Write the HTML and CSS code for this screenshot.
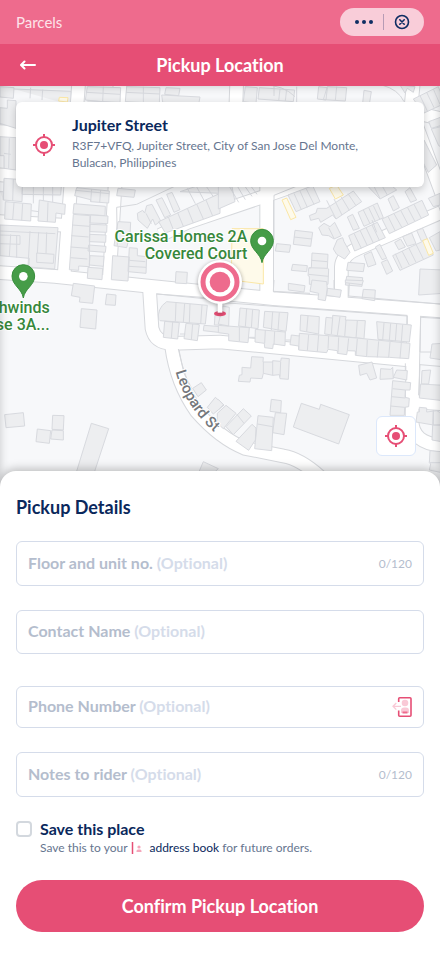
FILE: index.html
```html
<!DOCTYPE html>
<html lang="en">
  <head>
    <meta charset="UTF-8" />
    <meta name="viewport" content="width=device-width, initial-scale=1.0" />
    <title>Pickup Location</title>
    <link rel="stylesheet" href="styles.css">
  </head>
  <body>
    <!-- mini app bar -->
    <div class="app-bar">
      <span class="app-name">Parcels</span>
      <div class="capsule">
        <button type="button" class="capsule-btn" aria-label="More">
          <svg width="20" height="20" viewBox="0 0 20 20">
            <circle cx="3" cy="10" r="2" fill="#0f2d63" />
            <circle cx="10" cy="10" r="2" fill="#0f2d63" />
            <circle cx="17" cy="10" r="2" fill="#0f2d63" />
          </svg>
        </button>
        <button type="button" class="capsule-btn" aria-label="Close">
          <svg width="16" height="16" viewBox="0 0 16 16" fill="none" stroke="#0f2d63" stroke-width="1.6" stroke-linecap="round">
            <circle cx="8" cy="8" r="6.5" />
            <path d="M5.8 5.8l4.4 4.4M10.2 5.8l-4.4 4.4" />
          </svg>
        </button>
      </div>
    </div>

    <!-- title bar -->
    <header class="title-bar">
      <button type="button" class="back" aria-label="Back">
        <svg width="16" height="10" viewBox="0 0 16 10" fill="none" stroke="#fff" stroke-width="2" stroke-linecap="round" stroke-linejoin="round">
          <path d="M15 5H1.5M4.5 1.5L1 5l3.500 3.500" />
        </svg>
      </button>
      <h1>Pickup Location</h1>
    </header>

    <!-- map -->
    <section class="map">
      <svg class="map-canvas" viewBox="0 258 1320 1206" preserveAspectRatio="xMidYMin slice" role="img" aria-label="Map">
        <defs>
          <g id="roads">
            <path d="M-10 817L165 829L430 857L820 896L1340 934" />
            <path d="M448 860L456 985Q465 1028 515 1030L660 1026L1225 1080" />
            <path d="M1242 920L1238 1100L1236 1260Q1236 1332 1330 1336M1240 1206L1340 1212" />
            <path d="M515 1040Q530 1150 590 1235Q660 1315 735 1345L850 1368Q900 1376 960 1430" />
            <path d="M800 560L800 890" />
            <path d="M480 706L560 668L790 590L960 530" />
            <path d="M1024 900L1024 800Q1026 765 1075 745L1220 682L1340 630" />
            <path d="M236 250L218 480L192 830" />
            <path d="M360 250L345 560L328 835" />
            <path d="M-10 394L60 398M-10 524L70 530M-10 664L200 676" />
            <path d="M710 250L704 420M1240 250L1232 330L1340 620M1232 335L1340 360" />
          </g>
        </defs>
        <rect x="0" y="258" width="1320" height="1206" fill="#f7f8fa" />
        <use href="#roads" class="road-edge" />
        <use href="#roads" class="road" />

        <!-- north west blocks -->
        <g class="building" transform="translate(0 255)">
          <path d="M0 5L42 8L40 40L0 36zM42 12L213 19L211 60M92 8L90 40M128 14L126 45M0 68L22 70L22 45L48 47L48 130L0 115z" />
          <path d="M0 155L48 158V255L12 250V212H0zM12 205L32 208M28 160L26 250" />
          <path d="M262 5L362 8L360 55L256 45zM310 5L308 50M260 22L360 28M262 48L360 52M380 5L480 8L478 55L376 50zM430 5V55M378 22L480 27M498 8L540 10L536 32L494 28zM485 30L600 36L596 58L488 52z" />
          <path d="M12 280L68 284L66 350L10 345zM40 282L38 348M0 320L10 320V345M68 288L185 294L182 330L66 328zM100 290V355M130 291V360M158 293V362" />
          <path d="M16 350L94 357L92 408L14 402zM42 352L38 404M68 355L65 406M118 345L196 358L194 388L168 384L166 412L114 408zM144 352L142 411M94 377L116 380" />
          <path d="M0 420L174 428L164 552L86 546L88 520L0 512zM32 448L28 514M50 450V518M90 438L84 545M116 441L112 505M140 442L138 506M166 446L0 438M0 450L60 452V478L0 476M110 504L162 508L160 535L110 532z" />
          <path d="M230 308L328 318L326 354L272 350V344L224 332zM275 312L272 350M302 315L299 352M226 316L328 326" />
          <path d="M222 356L316 364L315 392L219 386z" />
          <path d="M220 388L270 392L268 545L236 543V556L208 554zM216 420L268 424M214 452L266 456M212 486L264 490M211 518L262 522M272 390L324 393L323 416L270 414zM270 418L321 420L320 442L269 440zM269 448L318 450L317 472L268 470zM266 480L318 484L316 502L264 498zM270 512L312 514L310 544L268 540zM264 547L308 550L306 584L262 580z" />
          <path d="M354 310L406 315L402 337L350 332z" />
          <path d="M354 410L392 412L390 450L380 488L342 482zM338 512L388 516L384 588L334 584zM388 488L412 490V512L440 515L438 565L384 560zM388 526L436 530M386 544L438 547" />
          <path d="M412 385L428 376L434 384L440 362L456 358L482 408L466 420L458 402L442 430L414 405zM438 385L454 416M468 345L486 338L512 390L494 398zM500 328L516 322L540 374L522 382z" />
          <path d="M476 410L660 325V385L496 444zM505 396L520 434M533 383L550 424M562 370L580 414M590 357L610 402M618 345L638 393M540 320L600 300H660V325zM562 310L586 356M588 302L612 346M616 300L640 335M470 442L490 458" />
          <path d="M528 560L562 562L560 596L526 594z" />
        </g>

        <!-- north east blocks -->
        <g class="building" transform="translate(660 255)">
          <path d="M76 5L112 8L108 55L70 50zM118 8L224 15L220 50L114 42zM180 12L176 48M200 12L196 48M230 5V60M296 5L322 8L318 45L292 42zM322 5L380 8L376 48L310 44zM350 5L346 46M432 16L454 20L448 58L428 54zM540 0L585 5L580 22L562 10L555 24z" />
          <path d="M580 42L655 5L675 55L610 85zM600 32L622 78M620 22L642 68M640 12L660 58M626 110L675 92V118L634 130zM634 132L662 125V185L656 182zM600 170L612 165L650 240L625 262L600 215z" />
          <path d="M-5 305L35 300L45 350L-5 372zM28 304L56 352M50 300L76 344M72 300L96 334M90 300L111 328" />
          <path d="M204 330L278 302L300 350L228 380zM222 325L244 374M240 318L262 367M258 310L282 358" />
          <path d="M268 392L288 384L292 370L320 370L400 318L425 350L348 402L338 390L302 412L296 400L272 406zM320 346L348 402M342 342L366 390M364 336L388 376M384 326L408 362" />
          <path d="M440 300L480 342L530 315L510 298zM460 300L480 340M485 300L502 330M555 320L570 308L590 345L572 352zM504 342L520 332L538 368L520 378z" />
          <path d="M296 428L312 415L330 425L344 412L364 452L342 462L326 452L306 450zM326 428L342 460M382 396L398 388L418 430L400 436z" />
          <path d="M414 382L472 354L490 398L432 424zM430 375L450 416M446 368L466 410M460 362L480 404M386 452L472 412L496 458L404 498zM402 445L424 490M420 436L442 482M438 428L460 474M456 420L478 466M456 405L470 442" />
          <path d="M486 402L606 346L626 390L508 446zM504 394L526 438M522 386L546 428M542 376L564 418M562 366L584 408M582 358L604 400M625 340L660 325V360L640 365zM655 360L665 390" />
          <path d="M340 492L352 464L368 458L372 470L390 502L374 522L350 508zM432 510L454 500L468 538L444 546zM466 486L480 478L500 520L486 524zM484 532L502 524L518 558L500 568z" />
          <path d="M518 512L610 468L640 510L540 556zM526 506L546 550M546 498L568 540M566 488L588 532M588 478L610 522M524 472L542 462L556 486L536 494zM548 455L575 444L588 476L562 484zM590 436L608 430L622 462L604 468zM628 458L660 440V495L648 498z" />
          <path d="M225 436L278 442L272 484L220 478zM222 456L276 462M170 476L212 480L208 502L166 498zM276 504L324 508L322 550L326 552L324 598H268V574L264 572L266 550L274 548zM274 526L322 530M266 548L322 550M266 568L325 574M218 538L262 542L260 560L214 556z" />
          <path d="M384 532L434 536L430 560L380 556zM380 574L428 578L426 604L376 600zM600 552L670 555V625L596 630z" />
        </g>

        <!-- south west blocks -->
        <g class="building" transform="translate(0 840)">
          <path d="M220 10L284 18L278 70L238 66L240 52L214 47zM320 42L348 45L346 76L316 74zM244 86L291 90L287 147L240 142z" />
          <path d="M14 404L70 398L74 438L18 443zM158 406L192 407L190 450L156 448zM156 450L190 452V480L152 477zM112 447L152 452L148 490L108 485zM274 430L326 446L282 580L228 580zM610 545L655 566L640 580H595z" />
          <path d="M476 122Q470 85 500 65L622 76L616 132L480 122M528 68L526 124M554 70L550 126M570 72L568 128M606 75L602 132M494 124L538 128L533 177L490 172zM518 126L514 174M558 130L598 134L592 182L552 176zM578 132L574 180M540 162H556M612 136L664 140V158L610 152zM645 105L664 107V135H643z" />
          <path d="M578 325L604 308L619 330L594 350zM646 352L672 375L640 402L622 382zM652 405L664 394V415z" />
        </g>

        <!-- south east blocks -->
        <g class="building" transform="translate(660 840)">
          <path d="M205 10L255 17L252 36L205 30zM276 0L320 5L322 28L316 62L294 58L296 40L270 34zM322 25L364 30L360 52L320 46zM376 0L430 2L426 14L376 8zM430 28L466 30L464 62L426 56z" />
          <path d="M8 78L28 82L26 138L-5 132zM60 84L118 90L114 146L56 138zM80 86L76 140M98 88L94 144M134 94L204 98L198 154L130 142zM158 95L154 150M178 97L174 152M-5 136L88 143L84 188L26 182V162L-5 158zM58 142L58 184" />
          <path d="M106 148L196 156L195 197L160 192L158 206L134 203L133 190L105 186zM136 150L134 190M164 154L162 194M88 172H105M196 180H212" />
          <path d="M242 105L298 110L296 162L240 152zM264 108L260 155M318 112L338 114V106L378 110L376 120L436 122L432 176L374 170L314 162zM338 114L334 162M360 110L352 166M378 120L374 170M412 122L408 175M470 125L574 135L568 186L474 178zM492 128L488 180M512 130L508 182M530 132L526 184M548 134L544 185" />
          <path d="M214 165L238 168V160L410 174L570 190L566 236L508 232L442 230L406 226V213L382 212L380 224L352 220V212L324 208L320 218L236 210V198L210 194zM238 165L236 208M266 164L262 212M296 164L292 215M326 168L324 206M356 172L354 218M386 175L382 212M412 176L408 225M442 180L440 228M476 184L472 232M510 186L506 232M544 188L540 235" />
          <path d="M95 230L130 232L129 246H158V242L182 244L184 234L208 236L205 298L180 296L178 284L158 286L130 280L126 296L92 294L90 306L55 304L58 286L66 284V262L92 264zM158 244V286M182 246L180 290M130 246V280" />
          <path d="M416 256L456 246L470 294L450 300L440 280L420 286zM482 266L512 268L518 262L520 296L480 298zM530 270L562 272L560 300L520 292zM518 302L572 308L570 330H556L555 352L568 355L566 380L554 382L553 406H510zM518 326L556 330M515 350L556 354M512 378L554 382" />
          <path d="M244 370L298 388L302 373L388 404L356 492L220 441z" />
          <path d="M154 358L184 362L182 398L150 394zM166 398L200 400L192 464L158 458zM114 407L160 412L155 512L104 506zM112 432L158 440M96 433L108 444L106 480L86 511L48 484zM18 376L48 400L10 446L-8 430V400zM70 386L94 408L40 464L18 440zM50 402L72 430M-5 358L10 374L-5 390" />
          <path d="M636 192L670 190V240L630 234zM606 272L632 270L626 312H604zM602 312L670 316V362L598 354zM598 382L620 384V396L650 392L665 400V435H640L588 426L592 396L598 396zM640 390V435H665V485L636 480zM630 512L675 516V580L628 570L632 552L628 548zM630 548H665" />
        </g>

        <!-- plot borders -->
        <g class="plot">
          <path d="M822 255V288M790 255Q850 255 885 290" />
          <path d="M822 720V586L928 543" />
          <path d="M1145 255Q1195 268 1212 305" />
          <path d="M352 737L350 622L410 613L530 556" />
          <path d="M822 840L820 874L930 880M1002 840V866M1048 850L1046 888L1320 912" />
          <path d="M1330 956L1262 952L1260 1056H1294M1330 1100L1260 1094L1256 1185" />
          <path d="M670 908L810 918L1222 948V972M1216 1112V1090" />
          <path d="M470 882L660 896M535 1047L552 1120L575 1165" />
        </g>

        <!-- yellow places -->
        <g class="place">
          <path d="M178 292L204 293L202 306L176 303z" />
          <path d="M696 686H778L790 686V852L694 840z" />
          <path d="M846 600L860 594L888 652L872 659z" />
          <path d="M988 565L1010 555L1030 585L1006 597z" />
          <path d="M1268 722L1282 716L1300 760L1286 766z" />
        </g>

        <path id="leopard" d="M527 1115Q553 1210 630 1285L690 1340" fill="none" />
        <text class="street-name"><textPath href="#leopard">Leopard St</textPath></text>

        <g class="place-name">
          <text x="742" y="727" text-anchor="end">Carissa Homes 2A</text>
          <text x="742" y="777" text-anchor="end">Covered Court</text>
          <text x="149" y="939" text-anchor="end">hwinds</text>
          <text x="149" y="989" text-anchor="end">se 3A...</text>
        </g>

        <!-- green pins -->
        <g id="pin" fill="#469c48" stroke="#388e3c" stroke-width="3">
          <path d="M786 788C782 760 752 750 752 722A34 34 0 0 1 820 722C820 750 790 760 786 788z" />
          <circle cx="786" cy="723" r="13" fill="#fff" stroke="none" />
        </g>
        <use href="#pin" x="-716" y="106" />

        <!-- pickup marker -->
        <ellipse cx="660" cy="941" rx="18" ry="8" fill="#e64e75" />
        <g class="marker" fill="#fff">
          <path d="M653 895h14v43h-14z" />
          <circle cx="660" cy="846" r="66" />
        </g>
        <circle cx="660" cy="846" r="51" fill="#fff" stroke="#ee6b8d" stroke-width="15" />
        <circle cx="660" cy="846" r="31" fill="#ee6b8d" />
      </svg>

      <div class="address-card">
        <svg class="target" viewBox="0 0 22 22" aria-hidden="true">
          <circle cx="11" cy="11" r="8" fill="none" stroke="#e64e75" stroke-width="2" />
          <circle cx="11" cy="11" r="4" fill="#e64e75" />
          <path d="M11 0v4M11 18v4M0 11h4M18 11h4" stroke="#e64e75" stroke-width="2" />
        </svg>
        <div class="address-text">
          <h2>Jupiter Street</h2>
          <p>R3F7+VFQ, Jupiter Street, City of San Jose Del Monte, Bulacan, Philippines</p>
        </div>
      </div>

      <button type="button" class="locate" aria-label="Use my location">
        <svg class="target" viewBox="0 0 22 22">
          <circle cx="11" cy="11" r="8" fill="none" stroke="#e64e75" stroke-width="2" />
          <circle cx="11" cy="11" r="4" fill="#e64e75" />
          <path d="M11 0v4M11 18v4M0 11h4M18 11h4" stroke="#e64e75" stroke-width="2" />
        </svg>
      </button>
    </section>

    <!-- details form -->
    <form class="sheet">
      <h2>Pickup Details</h2>

      <div class="field field-counted">
        <input type="text" id="floor" maxlength="120" />
        <label for="floor">Floor and unit no. <span>(Optional)</span></label>
        <span class="counter">0/120</span>
      </div>
      <div class="field">
        <input type="text" id="contact" />
        <label for="contact">Contact Name <span>(Optional)</span></label>
      </div>
      <div class="field field-phone">
        <input type="tel" id="phone" />
        <label for="phone">Phone Number <span>(Optional)</span></label>
        <button type="button" class="contacts" aria-label="Pick from contacts">
          <svg width="20" height="22" viewBox="0 0 20 22" fill="none">
            <circle cx="13" cy="7" r="3.300" fill="#f9c9d6" />
            <path d="M9 17v-2.500q0-3 3-3h2q3 0 3 3V17z" fill="#f9c9d6" />
            <path d="M10.500 16.500h5" stroke="#ee6b8d" stroke-width="2" />
            <path d="M6.700 6V2.700Q6.700 1.700 7.700 1.700H18Q19 1.700 19 2.700V19.300Q19 20.300 18 20.300H7.700Q6.700 20.300 6.700 19.300V14.500" stroke="#e64e75" stroke-width="1.600" />
            <path d="M9 10.300H1M4.300 7L1 10.300l3.300 3.300" stroke="#f9c9d6" stroke-width="1.300" />
          </svg>
        </button>
      </div>
      <div class="field field-counted">
        <input type="text" id="notes" maxlength="120" />
        <label for="notes">Notes to rider <span>(Optional)</span></label>
        <span class="counter">0/120</span>
      </div>

      <div class="save">
        <input type="checkbox" id="save" />
        <div>
          <label for="save">Save this place</label>
          <p>
            Save this to your
            <svg width="12" height="12" viewBox="0 0 12 12" aria-hidden="true">
              <path d="M1.500 0v12" stroke="#e64e75" stroke-width="1.500" />
              <circle cx="8" cy="5" r="1.600" fill="#f5a6bb" />
              <path d="M5.500 10V9q0-1.500 1.500-1.500h2q1.500 0 1.500 1.500v1z" fill="#f5a6bb" />
            </svg>
            <a href="#">address book</a> for future orders.
          </p>
        </div>
      </div>

      <button type="submit" class="confirm">Confirm Pickup Location</button>
    </form>
  </body>
</html>
```
FILE: styles.css
```css
:root {
  --pink: #e64e75;
  --pink-light: #ee6b8d;
  --navy: #0a285c;
  --slate: #66758f;
  --line: #d5dcea;
}

* {
  box-sizing: border-box;
}

body {
  margin: 0;
  background: #fff;
  color: var(--navy);
  font-family: Lato, sans-serif;
  font-variant-ligatures: none;
}

h1,
h2,
p {
  margin: 0;
}

button {
  border: 0;
  padding: 0;
  background: none;
  font-family: inherit;
  font-variant-ligatures: none;
  cursor: pointer;
}

svg {
  display: block;
}

/* top bars */
.app-bar {
  display: flex;
  align-items: center;
  justify-content: space-between;
  height: 44px;
  padding: 0 16px;
  background: var(--pink-light);
}

.app-name {
  color: #fde3ea;
  font-size: 15px;
}

.capsule {
  display: flex;
  align-items: center;
  width: 84px;
  height: 28px;
  padding: 0 4px 0 6px;
  border-radius: 14px;
  background: #f9cdd9;
}

.capsule-btn {
  display: flex;
  flex: 1;
  align-items: center;
  justify-content: center;
  height: 16px;
}

.capsule-btn + .capsule-btn {
  border-left: 1px solid #b79bb5;
}

.title-bar {
  display: grid;
  grid-template-columns: 24px 1fr 24px;
  align-items: center;
  height: 42px;
  padding: 0 16px;
  background: var(--pink);
}

.title-bar h1 {
  color: #fff;
  font-size: 18px;
  line-height: 24px;
  text-align: center;
}

.back {
  display: flex;
  justify-content: center;
}

/* map */
.map {
  position: relative;
  height: 402px;
  overflow: hidden;
}

.map::after {
  content: "";
  position: absolute;
  inset: 0;
  box-shadow: inset 0 0 10px rgba(0, 0, 0, 0.2);
  pointer-events: none;
}

.map-canvas {
  width: 100%;
  height: 100%;
}

.road-edge {
  fill: none;
  stroke: #d6d8dc;
  stroke-width: 44px;
}

.road {
  fill: none;
  stroke: #fff;
  stroke-width: 38px;
}

.building {
  fill: #edeef0;
  stroke: #d8dadf;
  stroke-width: 3px;
}

.plot {
  fill: none;
  stroke: #d6d8dc;
  stroke-width: 3px;
}

.place {
  fill: #fefaea;
  stroke: #fbe7a6;
  stroke-width: 3px;
}

.street-name {
  fill: #74777c;
  font: 500 45px Roboto, sans-serif;
  paint-order: stroke;
  stroke: #fff;
  stroke-width: 6px;
}

.place-name {
  fill: #37873b;
  font: 500 48px Roboto, sans-serif;
  paint-order: stroke;
  stroke: #fff;
  stroke-width: 6px;
}

.marker {
  filter: drop-shadow(0 3px 6px rgba(0, 0, 0, 0.35));
}

.target {
  flex-shrink: 0;
  width: 22px;
  height: 22px;
}

.address-card {
  position: absolute;
  z-index: 1;
  top: 16px;
  left: 16px;
  right: 16px;
  display: flex;
  align-items: center;
  gap: 17px;
  min-height: 85px;
  padding: 11px 48px 11px 17px;
  border-radius: 6px;
  background: #fff;
  box-shadow: 0 3px 8px rgba(0, 0, 0, 0.2);
}

.address-text {
  padding-bottom: 5px;
}

.address-card h2 {
  font-size: 16px;
  line-height: 24px;
}

.address-card p {
  color: var(--slate);
  font-size: 12px;
  line-height: 17px;
}

.locate {
  position: absolute;
  z-index: 1;
  right: 24px;
  bottom: 32px;
  display: flex;
  align-items: center;
  justify-content: center;
  width: 40px;
  height: 40px;
  border: 1px solid #dce8fb;
  border-radius: 6px;
  background: #fff;
}

/* bottom sheet */
.sheet {
  position: relative;
  z-index: 2;
  margin-top: -17px;
  padding: 24px 16px;
  border-radius: 16px 16px 0 0;
  background: #fff;
  box-shadow: 0 -2px 10px rgba(0, 0, 0, 0.25);
}

.sheet h2 {
  margin-bottom: 22px;
  font-size: 18px;
  line-height: 24px;
}

/* label and input share one grid cell */
.field {
  display: grid;
  grid-template-columns: 1fr auto;
  align-items: center;
  height: 44px;
  margin-bottom: 24px;
}

.field-counted {
  height: 45px;
}

.field-phone {
  height: 42px;
  margin-top: 32px;
}

.field input {
  grid-area: 1 / 1 / 2 / 3;
  width: 100%;
  height: 100%;
  padding: 0 48px 0 12px;
  border: 1px solid var(--line);
  border-radius: 6px;
  background: #fff;
  color: var(--navy);
  font: 400 16px Lato, sans-serif;
}

.field label {
  grid-area: 1 / 1;
  padding: 0 0 2px 12px;
  color: #b4bdcd;
  font-size: 16px;
  font-weight: 700;
  line-height: 20px;
  pointer-events: none;
}

.field label span {
  color: #d5dcea;
}

.counter,
.contacts {
  grid-area: 1 / 2;
  margin-right: 12px;
}

.counter {
  color: #b4bdcd;
  font-size: 12px;
}

.save {
  display: flex;
  gap: 8px;
  margin-bottom: 24px;
}

.save input {
  appearance: none;
  width: 16px;
  height: 16px;
  margin: 0;
  border: 2px solid #d3d8de;
  border-radius: 4px;
}

.save label {
  display: block;
  font-size: 16px;
  font-weight: 700;
  line-height: 16px;
}

.save p {
  margin-top: 3px;
  color: var(--slate);
  font-size: 12px;
  line-height: 16px;
}

.save svg {
  display: inline-block;
  margin: 0 3px 0 1px;
  vertical-align: -2px;
}

.save a {
  color: var(--navy);
  text-decoration: none;
}

.confirm {
  width: 100%;
  height: 52px;
  border-radius: 26px;
  background: var(--pink);
  color: #fff;
  font-size: 18px;
  font-weight: 700;
}
```
